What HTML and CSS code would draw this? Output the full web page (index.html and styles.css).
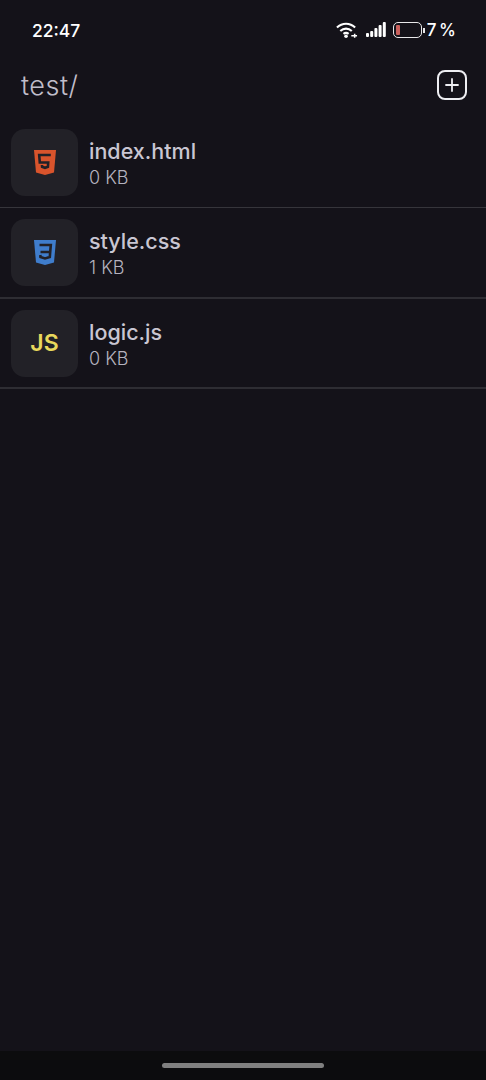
FILE: index.html
```html
<!DOCTYPE html>
<html lang="en">
<head>
    <meta charset="UTF-8">
    <meta name="viewport" content="width=device-width, initial-scale=1.0">
    <title>test/</title>
    <link rel="stylesheet" href="styles.css">
</head>
<body>
    <div class="screen">
        <div class="status-bar">
            <span class="clock">22:47</span>
            <div class="status-icons">
                <svg class="wifi" width="22" height="18" viewBox="0 0 23 18" fill="none" stroke="#fff" stroke-width="2.200">
                    <path d="M1 6.500C6.500 1.200 14.500 1.200 20 6.500"/>
                    <path d="M4.500 10C8 6.800 13 6.800 16.500 10"/>
                    <path d="M7.800 13C9.500 11.700 11.500 11.700 13.200 13"/>
                    <circle cx="10.500" cy="15.500" r="1.900" fill="#fff" stroke="none"/>
                    <path d="M16 15H22M19.500 12.800V17.200" stroke-width="1.600"/>
                </svg>
                <svg class="signal" width="20" height="16" viewBox="0 0 20 16" fill="#fff">
                    <rect x="0" y="11" width="3" height="4" rx="1"/>
                    <rect x="4.200" y="9" width="3" height="6" rx="1"/>
                    <rect x="8.400" y="6" width="3" height="9" rx="1"/>
                    <rect x="12.600" y="3" width="3" height="12" rx="1"/>
                    <rect x="16.800" y="0" width="3" height="15" rx="1"/>
                </svg>
                <div class="battery">
                    <div class="battery-body"><div class="battery-level"></div></div>
                    <div class="battery-tip"></div>
                </div>
                <span class="percent">7 %</span>
            </div>
        </div>

        <div class="header">
            <span class="path">test/</span>
            <button class="add-button" aria-label="New file">
                <svg width="14" height="14" viewBox="0 0 14 14" stroke="#eeeef2" stroke-width="1.800" stroke-linecap="round">
                    <path d="M7 1V13M1 7H13"/>
                </svg>
            </button>
        </div>

        <div class="file-list">
            <div class="file-row">
                <div class="file-icon">
                    <svg width="24" height="27" viewBox="0 0 24 27">
                        <path d="M1 1H23L21 23.500L12 26L3 23.500Z" fill="#d9542c"/>
                        <path d="M17.800 6H6.200L6.800 13.500H15.200L14.900 17.800L12 18.800L9.100 17.800L9 16" fill="none" stroke="#222127" stroke-width="2.600"/>
                    </svg>
                </div>
                <div class="file-info">
                    <span class="file-name">index.html</span>
                    <span class="file-size">0 KB</span>
                </div>
            </div>
            <div class="file-row">
                <div class="file-icon">
                    <svg width="24" height="27" viewBox="0 0 24 27">
                        <path d="M1 1H23L21 23.500L12 26L3 23.500Z" fill="#3f7dcc"/>
                        <path d="M6.500 6H17.800L17.200 13H7.500M17.200 13L16.800 18L12 19.500L7.500 18L7.300 16" fill="none" stroke="#222127" stroke-width="2.600"/>
                    </svg>
                </div>
                <div class="file-info">
                    <span class="file-name">style.css</span>
                    <span class="file-size">1 KB</span>
                </div>
            </div>
            <div class="file-row">
                <div class="file-icon">
                    <span class="js-label">JS</span>
                </div>
                <div class="file-info">
                    <span class="file-name">logic.js</span>
                    <span class="file-size">0 KB</span>
                </div>
            </div>
        </div>

        <div class="nav-bar">
            <div class="nav-handle"></div>
        </div>
    </div>
</body>
</html>
```

FILE: styles.css
```css
* {
    margin: 0;
    padding: 0;
    box-sizing: border-box;
}

body {
    background-color: #141219;
    color: #c9c6d2;
    font-family: 'Inter', 'Liberation Sans', sans-serif;
}

.screen {
    height: 100vh;
    display: flex;
    flex-direction: column;
    overflow: hidden;
}

.status-bar {
    height: 60px;
    flex-shrink: 0;
    display: flex;
    justify-content: space-between;
    align-items: center;
    padding: 0 30px 0 32px;
    color: #fff;
}

.clock {
    font-size: 17.500px;
    font-weight: 500;
}

.status-icons {
    display: flex;
    align-items: center;
}

.wifi {
    margin-right: 8px;
}

.signal {
    margin-right: 7px;
}

.battery {
    display: flex;
    align-items: center;
    gap: 1px;
    margin-right: 2px;
}

.battery-body {
    width: 29px;
    height: 16px;
    border: 1.500px solid #e8e8ea;
    border-radius: 5px;
    padding: 2px;
}

.battery-level {
    width: 4px;
    height: 100%;
    background: #c9605c;
    border-radius: 1px;
}

.battery-tip {
    width: 1.500px;
    height: 5px;
    background: #e8e8ea;
}

.percent {
    font-size: 17px;
    font-weight: 500;
    word-spacing: -2px;
}

.header {
    height: 58px;
    flex-shrink: 0;
    display: flex;
    justify-content: space-between;
    align-items: center;
    padding: 0 19px 8px 21px;
}

.path {
    font-size: 27px;
    font-weight: 300;
    letter-spacing: 0.5px;
    color: #c0bdca;
}

.add-button {
    width: 30px;
    height: 30px;
    background: none;
    border: 2px solid #eeeef2;
    border-radius: 8px;
    display: flex;
    justify-content: center;
    align-items: center;
}

.file-list {
    flex: 1;
}

.file-row {
    height: 90px;
    display: flex;
    align-items: center;
    gap: 11px;
    padding-left: 11px;
    border-bottom: 1px solid #36353b;
}

.file-row + .file-row {
    border-bottom: 2px solid #2e2d33;
}

.file-row:nth-child(2) {
    height: 91px;
}

.file-icon {
    width: 67px;
    height: 67px;
    flex-shrink: 0;
    background: #222127;
    border-radius: 14px;
    display: flex;
    justify-content: center;
    align-items: center;
}

.js-label {
    font-size: 23px;
    font-weight: 600;
    color: #e8d85c;
}

.file-info {
    display: flex;
    flex-direction: column;
    gap: 3px;
    padding-top: 2px;
}

.file-name {
    font-size: 21.500px;
    font-weight: 500;
    line-height: 26px;
    color: #c9c6d2;
}

.file-size {
    font-size: 18px;
    font-weight: 300;
    line-height: 22px;
    color: #b5b2bf;
}

.nav-bar {
    height: 29px;
    flex-shrink: 0;
    background: #0c0c0e;
    display: flex;
    justify-content: center;
    padding-top: 12px;
}

.nav-handle {
    width: 162px;
    height: 5px;
    background: #808080;
    border-radius: 3px;
}
```
